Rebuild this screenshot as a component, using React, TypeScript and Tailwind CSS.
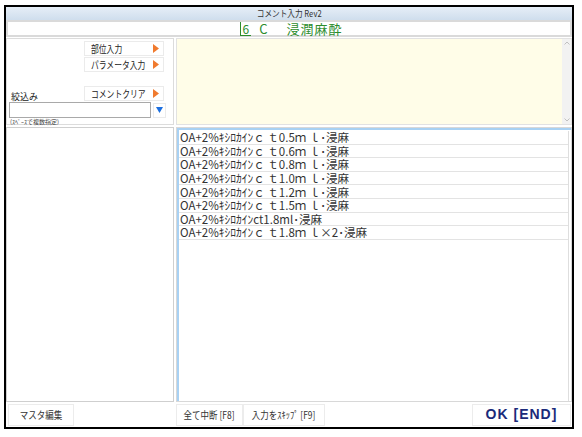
import React from "react";

const rows = [
  "OA+2%ｷｼﾛｶｲﾝｃ ｔ0.5ｍ ｌ･浸麻",
  "OA+2%ｷｼﾛｶｲﾝｃ ｔ0.6ｍ ｌ･浸麻",
  "OA+2%ｷｼﾛｶｲﾝｃ ｔ0.8ｍ ｌ･浸麻",
  "OA+2%ｷｼﾛｶｲﾝｃ ｔ1.0ｍ ｌ･浸麻",
  "OA+2%ｷｼﾛｶｲﾝｃ ｔ1.2ｍ ｌ･浸麻",
  "OA+2%ｷｼﾛｶｲﾝｃ ｔ1.5ｍ ｌ･浸麻",
  "OA+2%ｷｼﾛｶｲﾝct1.8ml･浸麻",
  "OA+2%ｷｼﾛｶｲﾝｃ ｔ1.8ｍ ｌ×2･浸麻",
];

const font = "font-['Noto_Sans_CJK_JP','Noto_Sans',sans-serif]";

// オレンジの三角 (ボタン右側)
function Arrow() {
  return (
    <svg width="6" height="9" viewBox="0 0 6 9" className="shrink-0">
      <polygon points="0,0 6,4.5 0,9" fill="#f07a2e" />
    </svg>
  );
}

function SideButton({ label }: { label: string }) {
  return (
    <div className="w-[80px] h-[15px] flex items-center justify-between pl-[6px] pr-[4px] bg-white border border-[#ebebeb] text-[10px] leading-none text-[#222]">
      <span className="inline-block origin-left scale-x-[0.78] whitespace-nowrap w-[60px]">{label}</span>
      <Arrow />
    </div>
  );
}

function FooterButton({ label, className }: { label: string; className: string }) {
  return (
    <div
      className={`h-[22px] flex items-center justify-center bg-white border border-[#ececec] text-[10px] text-[#333] ${className}`}
    >
      <span className="inline-block scale-x-[0.85] whitespace-nowrap">{label}</span>
    </div>
  );
}

export default function App() {
  return (
    <div className={`w-[582px] h-[437px] bg-white pt-[5px] pl-[4px] ${font}`}>
      <div className="w-[570px] h-[424px] border-2 border-black flex flex-col bg-white">
        {/* タイトル */}
        <div className="h-[13px] bg-gradient-to-b from-[#e6eef7] to-[#cfdeed] flex items-center justify-center text-[9px] leading-none text-[#333]">
          <span className="inline-block scale-x-[0.85] whitespace-nowrap">コメント入力 Rev2</span>
        </div>
        {/* 歯式 + 処置名 */}
        <div className="h-[17px] border-2 border-[#dadada] flex items-center justify-center text-[13px] leading-none text-[#2c8c2c]">
          <span className="border-l border-b border-[#2c8c2c] pl-[2px] pr-[2px] h-[14px] flex items-end text-[12px] ml-[4px]">
            6
          </span>
          <span className="ml-[8px]">C</span>
          <span className="ml-[19px] tracking-[1px]">浸潤麻酔</span>
        </div>

        <div className="flex-1 flex gap-[2px] pt-[1px]">
          {/* 左列 */}
          <div className="w-[168px] flex flex-col gap-[2px]">
            <div className="h-[87px] border border-[#dcdcdc] pl-[1px] pt-[2px] flex flex-col">
              <div className="ml-[76px]">
                <SideButton label="部位入力" />
              </div>
              <div className="ml-[76px] mt-[1px]">
                <SideButton label="パラメータ入力" />
              </div>
              <div className="flex items-end mt-[14px]">
                <span className="w-[76px] pl-[3px] text-[9px] leading-none text-[#222]">
                  絞込み
                </span>
                <SideButton label="コメントクリア" />
              </div>
              <div className="flex items-center mt-[1px]">
                <div className="w-[142px] h-[16px] ml-[1px] bg-white border border-[#a9a9a9]" />
                <div className="w-[13px] h-[15px] ml-[2px] flex items-center justify-center bg-white border border-[#ebebeb]">
                  <svg width="7" height="6" viewBox="0 0 7 6">
                    <polygon points="0,0 7,0 3.5,6" fill="#1c6fe0" />
                  </svg>
                </div>
              </div>
              <div className="text-[6px] leading-none text-[#444] pl-[2px] mt-[1px]">
                (ｽﾍﾟｰｽで複数指定)
              </div>
            </div>
            <div className="flex-1 border border-[#cfcfcf]" />
          </div>

          {/* 右列 */}
          <div className="flex-1 flex flex-col gap-[2px]">
            <div className="h-[87px] border border-[#e2e2e2] flex">
              <div className="flex-1 bg-[#fffde8]" />
              <div className="w-[9px] bg-[#f2f2f2] flex flex-col items-center justify-between py-[2px]">
                <svg width="6" height="4" viewBox="0 0 6 4">
                  <polyline points="0.5,3.5 3,1 5.5,3.5" fill="none" stroke="#c0c0c0" strokeWidth="1" />
                </svg>
                <svg width="6" height="4" viewBox="0 0 6 4">
                  <polyline points="0.5,0.5 3,3 5.5,0.5" fill="none" stroke="#c0c0c0" strokeWidth="1" />
                </svg>
              </div>
            </div>
            <div className="flex-1 border border-[#d8d8d8] flex">
              <div className="flex-1 border-t-2 border-l-2 border-[#a8d1f3] pt-[1px] pr-[2px]">
                <div className="border-r border-[#dedede] h-full">
                  {rows.map((r) => (
                    <div
                      key={r}
                      className="h-[13.6px] flex items-center pl-[1px] border-b border-[#e3e3e3] text-[11.5px] leading-[12px] text-[#333] whitespace-nowrap"
                    >
                      {r}
                    </div>
                  ))}
                </div>
              </div>
            </div>
          </div>
        </div>

        {/* 下部ボタン */}
        <div className="h-[25px] flex items-center pl-[2px] pr-[1px]">
          <FooterButton label="マスタ編集" className="w-[66px]" />
          <FooterButton label="全て中断 [F8]" className="w-[67px] ml-[102px]" />
          <FooterButton label="入力をｽｷｯﾌﾟ [F9]" className="w-[82px]" />
          <div className="ml-auto w-[99px] h-[22px] flex items-center justify-center bg-white border border-[#ececec] text-[14px] font-bold tracking-[1px] text-[#1b2a7a] font-['Liberation_Sans',sans-serif]">
            OK [END]
          </div>
        </div>
      </div>
    </div>
  );
}
